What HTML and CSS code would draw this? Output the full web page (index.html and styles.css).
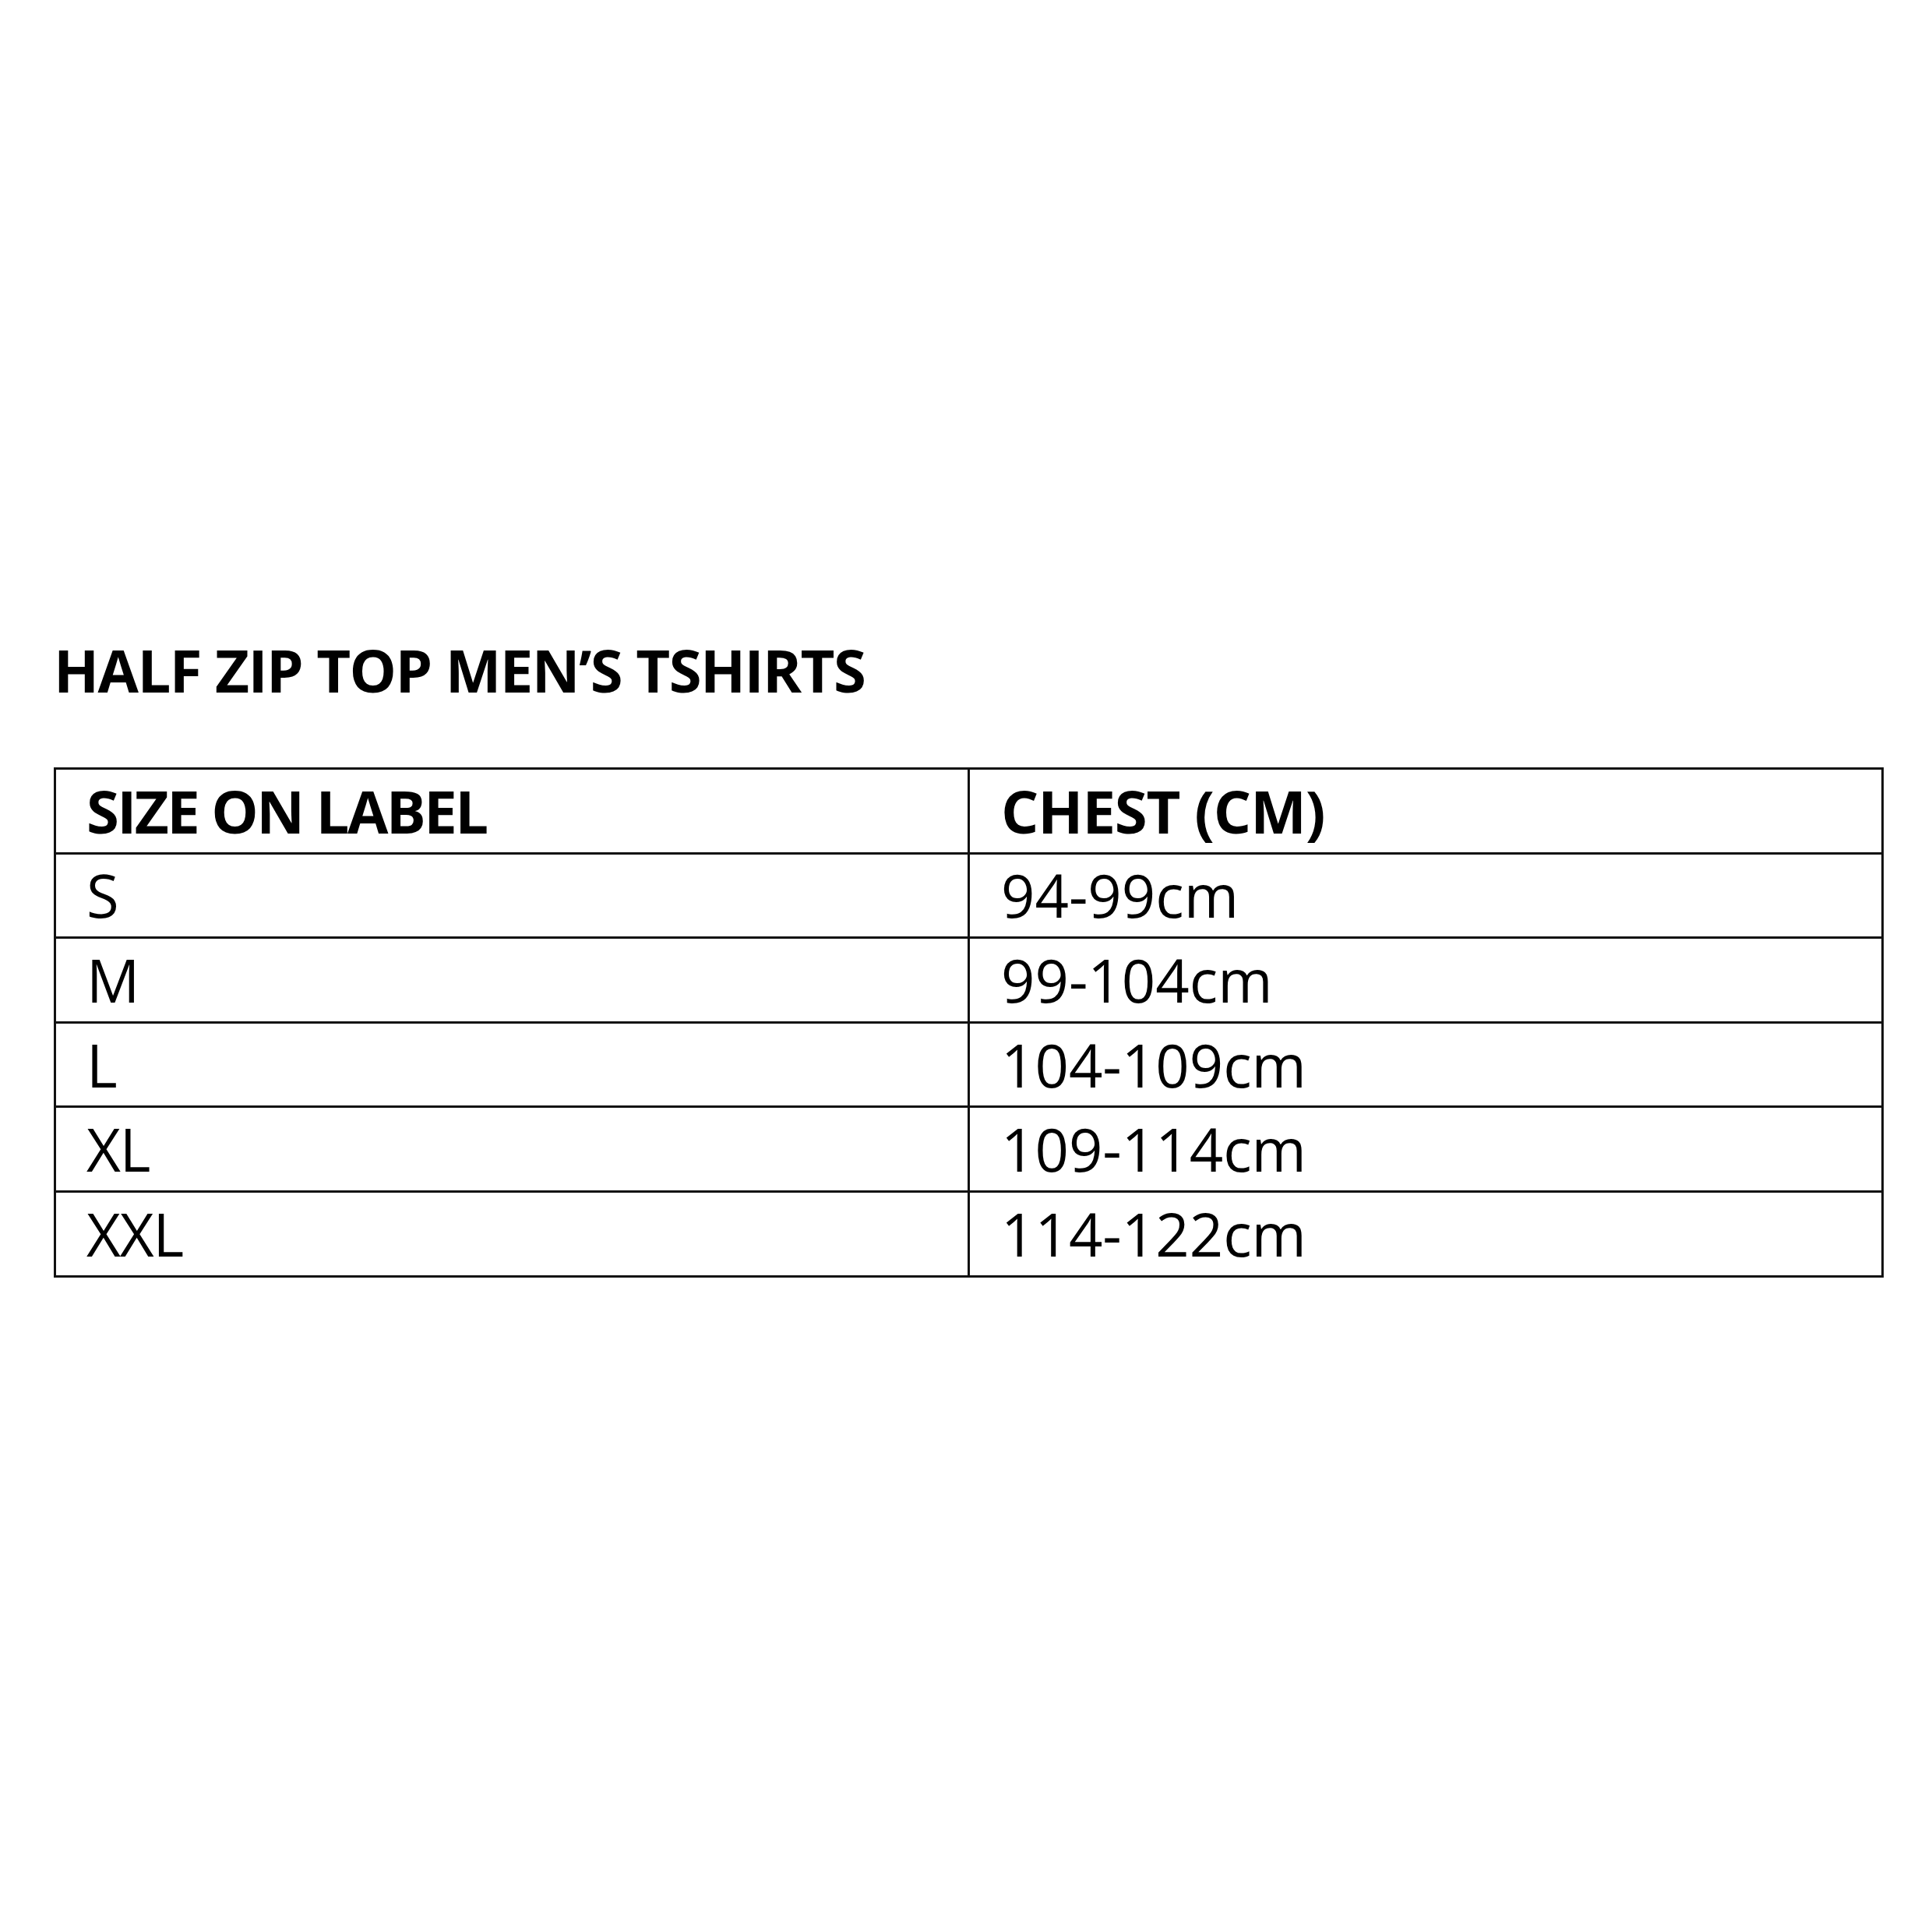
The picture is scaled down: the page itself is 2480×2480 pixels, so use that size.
FILE: index.html
```html
<!DOCTYPE html>
<html>
<head>
<meta charset="utf-8">
<link rel="stylesheet" href="styles.css">
</head>
<body>
<main class="page">
  <h1 class="title">HALF ZIP TOP MEN’S TSHIRTS</h1>
  <div class="table">
    <div class="row head"><div class="cell">SIZE ON LABEL</div><div class="cell">CHEST (CM)</div></div>
    <div class="row"><div class="cell">S</div><div class="cell">94-99cm</div></div>
    <div class="row"><div class="cell">M</div><div class="cell">99-104cm</div></div>
    <div class="row"><div class="cell">L</div><div class="cell">104-109cm</div></div>
    <div class="row"><div class="cell">XL</div><div class="cell">109-114cm</div></div>
    <div class="row"><div class="cell">XXL</div><div class="cell">114-122cm</div></div>
  </div>
</main>
</body>
</html>
```
FILE: styles.css
```css
html, body {
  margin: 0;
  padding: 0;
  background: #fff;
}
.page {
  width: 2480px;
  height: 2480px;
  box-sizing: border-box;
  padding: 810px 62px 0 69px;
  font-family: "Open Sans", "Liberation Sans", sans-serif;
  color: #000;
}
.title {
  margin: 0;
  font-size: 76px;
  font-weight: 700;
  line-height: 100px;
  letter-spacing: -1.6px;
  height: 175px;
}
.table {
  border: 3px solid #111;
  display: flex;
  flex-direction: column;
}
.row {
  display: grid;
  grid-template-columns: 1170px 1fr;
  height: 108.6px;
  box-sizing: border-box;
  border-top: 3px solid #111;
}
.row.head {
  border-top: 0;
  height: 105.6px;
  font-weight: 700;
}
.cell {
  display: flex;
  align-items: center;
  padding-left: 39px;
  font-size: 76px;
  letter-spacing: -1.2px;
  line-height: 1;
}
.cell + .cell {
  border-left: 3px solid #111;
  padding-left: 40px;
  letter-spacing: 0;
}
.row.head .cell {
  letter-spacing: -2.6px;
}
.row.head .cell + .cell {
  letter-spacing: -1.1px;
}
```
